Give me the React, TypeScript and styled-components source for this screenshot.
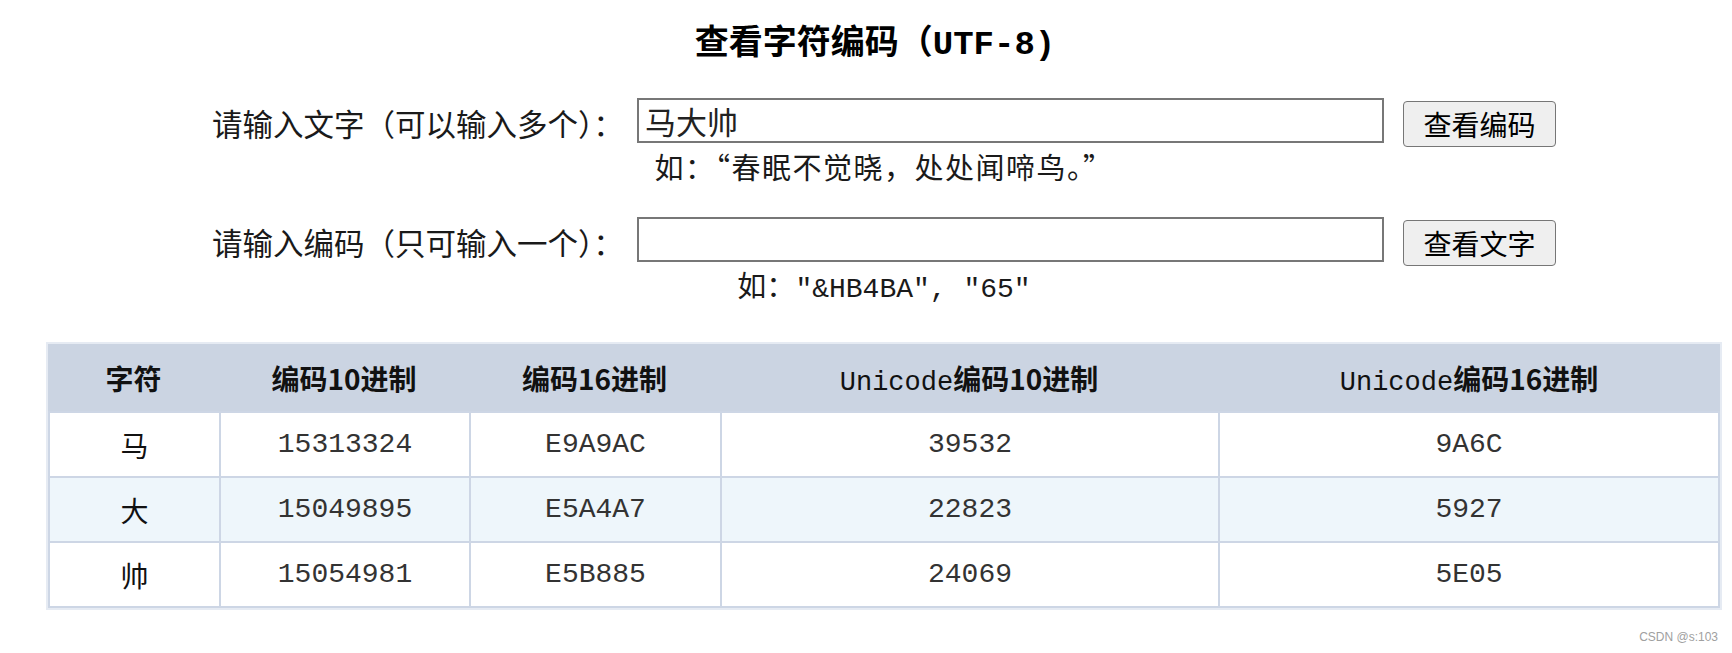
import styled, { createGlobalStyle } from "styled-components";

const GlobalStyle = createGlobalStyle`
  html, body {
    margin: 0;
    padding: 0;
    background: #ffffff;
  }
  body {
    font-family: "Noto Sans CJK SC", "Noto Sans", sans-serif;
    color: #1a1a1a;
  }
`;

const CJK = `"Noto Sans CJK SC", "Noto Sans", sans-serif`;
const MONO = `"Liberation Mono", "DejaVu Sans Mono", monospace`;

interface CodeRow {
  char: string;
  dec: string;
  hex: string;
  uniDec: string;
  uniHex: string;
}

const rows: CodeRow[] = [
  { char: "马", dec: "15313324", hex: "E9A9AC", uniDec: "39532", uniHex: "9A6C" },
  { char: "大", dec: "15049895", hex: "E5A4A7", uniDec: "22823", uniHex: "5927" },
  { char: "帅", dec: "15054981", hex: "E5B885", uniDec: "24069", uniHex: "5E05" },
];

const Page = styled.div`
  width: 1732px;
  height: 653px;
  box-sizing: border-box;
  padding-left: 36px;
  padding-top: 19px;
  display: flex;
  flex-direction: column;
  align-items: center;
`;

const Title = styled.h2`
  margin: 0 0 0 -18px;
  font-family: ${CJK};
  font-size: 34px;
  font-weight: 700;
  line-height: 42px;
  color: #000;
`;

const Mono = styled.span<{ $size?: number; $weight?: number }>`
  font-family: ${MONO};
  font-size: ${(p) => (p.$size ? `${p.$size}px` : "inherit")};
  font-weight: ${(p) => p.$weight ?? "inherit"};
  letter-spacing: 0;
`;

const Form = styled.div`
  display: flex;
  flex-direction: column;
  align-items: center;
  margin-top: 32px;
`;

const FieldRow = styled.div`
  display: flex;
  align-items: flex-start;
  width: 1344px;
`;

const Label = styled.label`
  width: 393px;
  flex: none;
  margin-top: 3px;
  font-family: ${CJK};
  font-size: 30.5px;
  line-height: 45px;
  color: #1a1a1a;
  white-space: nowrap;
`;

const TextInput = styled.input`
  box-sizing: border-box;
  flex: none;
  width: 747px;
  height: 45px;
  margin: 0 0 0 32px;
  border: 2px solid #777;
  border-radius: 0;
  padding: 0 6px;
  font-family: ${CJK};
  font-size: 31px;
  color: #222;
  background: #fff;
  outline: none;
`;

const Button = styled.button`
  box-sizing: border-box;
  flex: none;
  width: 153px;
  height: 46px;
  margin: 3px 0 0 19px;
  border: 1px solid #767676;
  border-radius: 4px;
  background: #efefef;
  font-family: ${CJK};
  font-size: 28px;
  line-height: 1;
  padding: 0;
  color: #000;
`;

const Hint = styled.div<{ $gap: number; $spacing?: number }>`
  margin-top: ${(p) => p.$gap}px;
  font-family: ${CJK};
  font-size: 29px;
  line-height: 32px;
  letter-spacing: ${(p) => p.$spacing ?? 0}px;
  color: #1a1a1a;
  white-space: nowrap;
`;

const SecondRow = styled.div`
  margin-top: 35px;
  display: flex;
  flex-direction: column;
  align-items: center;
`;

const Table = styled.table`
  margin-top: 36px;
  width: 1672px;
  table-layout: fixed;
  border-collapse: separate;
  border-spacing: 0;
  border: 2px solid #e6ebf3;
`;

const HeadCell = styled.th`
  height: 67px;
  padding: 0;
  background: #cbd4e2;
  font-family: ${CJK};
  font-size: 28px;
  font-weight: 700;
  color: #111;
  text-align: center;
  white-space: nowrap;
`;

const Row = styled.tr<{ $alt?: boolean }>`
  background: ${(p) => (p.$alt ? "#eef6fb" : "#ffffff")};
`;

const Cell = styled.td<{ $mono?: boolean }>`
  height: 63px;
  padding: 0;
  border-top: 2px solid #cdd6e5;
  border-left: 2px solid #cdd6e5;
  text-align: center;
  font-family: ${(p) => (p.$mono ? MONO : CJK)};
  font-size: 28px;
  color: ${(p) => (p.$mono ? "#333" : "#111")};

  &:last-child {
    border-right: 2px solid #cdd6e5;
  }

  tr:last-child > & {
    border-bottom: 2px solid #cdd6e5;
  }
`;

const Footer = styled.div`
  align-self: stretch;
  text-align: right;
  padding-right: 14px;
  margin-top: 20px;
  font-family: "Liberation Sans", Arial, sans-serif;
  font-size: 12px;
  color: #a0a0a0;
`;

export default function App() {
  return (
    <>
      <GlobalStyle />
      <Page>
        <Title>
          查看字符编码（<Mono>UTF-8)</Mono>
        </Title>

        <Form>
          <FieldRow>
            <Label>请输入文字（可以输入多个）：</Label>
            <TextInput defaultValue="马大帅" />
            <Button>查看编码</Button>
          </FieldRow>
          <Hint $gap={3} $spacing={1.5}>
            如：“春眠不觉晓，处处闻啼鸟。”
          </Hint>

          <SecondRow>
            <FieldRow>
              <Label>请输入编码（只可输入一个）：</Label>
              <TextInput defaultValue="" />
              <Button>查看文字</Button>
            </FieldRow>
            <Hint $gap={2}>
              如：<Mono $size={28}>"&amp;HB4BA", "65"</Mono>
            </Hint>
          </SecondRow>
        </Form>

        <Table>
          <colgroup>
            <col style={{ width: 171 }} />
            <col style={{ width: 250 }} />
            <col style={{ width: 251 }} />
            <col style={{ width: 498 }} />
            <col style={{ width: 502 }} />
          </colgroup>
          <thead>
            <tr>
              <HeadCell>字符</HeadCell>
              <HeadCell>编码10进制</HeadCell>
              <HeadCell>编码16进制</HeadCell>
              <HeadCell>
                <Mono $size={27} $weight={400}>Unicode</Mono>编码10进制
              </HeadCell>
              <HeadCell>
                <Mono $size={27} $weight={400}>Unicode</Mono>编码16进制
              </HeadCell>
            </tr>
          </thead>
          <tbody>
            {rows.map((r, i) => (
              <Row key={r.char} $alt={i === 1}>
                <Cell>{r.char}</Cell>
                <Cell $mono>{r.dec}</Cell>
                <Cell $mono>{r.hex}</Cell>
                <Cell $mono>{r.uniDec}</Cell>
                <Cell $mono>{r.uniHex}</Cell>
              </Row>
            ))}
          </tbody>
        </Table>

        <Footer>CSDN @s:103</Footer>
      </Page>
    </>
  );
}
